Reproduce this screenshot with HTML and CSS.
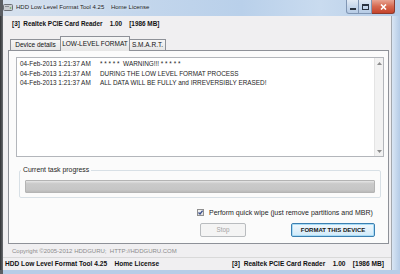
FILE: index.html
```html
<!DOCTYPE html>
<html lang="en">
<head>
  <meta charset="UTF-8">
  <title>HDD Low Level Format Tool 4.25</title>
  <link rel="stylesheet" href="styles.css">
</head>
<body>
  <div class="window">
    <div class="titlebar">
      <svg class="app-icon" width="10" height="9" viewBox="0 0 10 9">
        <rect x="0.5" y="1.5" width="9" height="6" rx="1" fill="#c9ccd1" stroke="#6d7178"/>
        <rect x="2" y="3" width="4" height="1" fill="#8a8f96"/>
        <circle cx="7.5" cy="5" r="0.8" fill="#5fb04a"/>
      </svg>
      <span class="title">HDD Low Level Format Tool 4.25&nbsp;&nbsp;&nbsp;&nbsp;Home License</span>
      <div class="controls">
        <div class="ctl ctl-min">
          <svg width="6" height="6" viewBox="0 0 6 6"><rect x="0" y="4" width="6" height="2" fill="#2b3340"/></svg>
        </div>
        <div class="ctl ctl-max">
          <svg width="7" height="6" viewBox="0 0 7 6"><rect x="0.5" y="0.5" width="6" height="5" fill="none" stroke="#2b3340"/><rect x="1" y="1" width="5" height="1" fill="#2b3340"/></svg>
        </div>
        <div class="ctl ctl-close">
          <svg width="7" height="6" viewBox="0 0 7 6"><path d="M1 0.5 L6 5.5 M6 0.5 L1 5.5" stroke="#fff" stroke-width="1.6"/></svg>
        </div>
      </div>
    </div>

    <div class="frame">
      <div class="edge-left"></div>
      <div class="client">
        <div class="device-line">[3]&nbsp;&nbsp;Realtek PCIE Card Reader&nbsp;&nbsp;&nbsp;&nbsp;1.00&nbsp;&nbsp;&nbsp;&nbsp;[1986 MB]</div>

        <div class="tabs">
          <div class="tab tab-device">Device details</div>
          <div class="tab tab-active">LOW-LEVEL FORMAT</div>
          <div class="tab tab-smart">S.M.A.R.T.</div>
        </div>

        <div class="panel">
          <div class="log">
            <div class="log-lines">
              <div class="log-row"><span class="log-date">04-Feb-2013 1:21:37 AM</span><span class="log-msg">* * * * *&nbsp;&nbsp;WARNING!!! * * * * *</span></div>
              <div class="log-row"><span class="log-date">04-Feb-2013 1:21:37 AM</span><span class="log-msg">DURING THE LOW LEVEL FORMAT PROCESS</span></div>
              <div class="log-row"><span class="log-date">04-Feb-2013 1:21:37 AM</span><span class="log-msg">ALL DATA WILL BE FULLY and IRREVERSIBLY ERASED!</span></div>
            </div>
            <div class="scrollbar">
              <svg width="5" height="3" viewBox="0 0 5 3"><path d="M0 3 L2.5 0 L5 3 Z" fill="#8c8c8c"/></svg>
              <svg width="5" height="3" viewBox="0 0 5 3"><path d="M0 0 L2.5 3 L5 0 Z" fill="#8c8c8c"/></svg>
            </div>
          </div>

          <fieldset class="progress-group">
            <legend>Current task progress</legend>
            <div class="progress-bar"></div>
          </fieldset>

          <div class="quick-wipe">
            <span class="checkbox">
              <svg width="5" height="5" viewBox="0 0 5 5"><path d="M0.5 2.5 L2 4 L4.6 0.6" fill="none" stroke="#3a4f8a" stroke-width="1.3"/></svg>
            </span>
            <span>Perform quick wipe (just remove partitions and MBR)</span>
          </div>

          <div class="actions">
            <div class="btn btn-stop">Stop</div>
            <div class="btn btn-format">FORMAT THIS DEVICE</div>
          </div>
        </div>

        <div class="copyright">Copyright ©2005-2012 HDDGURU;&nbsp;&nbsp;HTTP://HDDGURU.COM</div>

        <div class="statusbar">
          <span>HDD Low Level Format Tool 4.25&nbsp;&nbsp;&nbsp;&nbsp;Home License</span>
          <span>[3]&nbsp;&nbsp;Realtek PCIE Card Reader&nbsp;&nbsp;&nbsp;&nbsp;1.00&nbsp;&nbsp;&nbsp;&nbsp;[1986 MB]</span>
        </div>
      </div>
      <div class="edge-right"></div>
    </div>
    <div class="edge-bottom"></div>
  </div>
</body>
</html>
```

FILE: styles.css
```css
* {
  box-sizing: border-box;
}
body {
  margin: 0;
  padding: 0;
  font-family: "Liberation Sans", Arial, sans-serif;
  background-color: #3c3c3c;
}
.window {
  width: 400px;
  height: 274px;
  display: flex;
  flex-direction: column;
  overflow: hidden;
}
.titlebar {
  height: 16px;
  display: flex;
  align-items: flex-start;
  background: linear-gradient(90deg, #d6e1ee 0%, #c3d6ec 35%, #b9d0ea 60%, #c9dbef 80%, #b6cde8 100%);
  border-left: 3px solid #5b5e63;
}
.app-icon {
  margin: 3px 0 0 0;
}
.title {
  margin: 3px 0 0 3px;
  font-size: 6px;
  line-height: 8px;
  color: #1c1c1c;
  text-shadow: 0 0 3px #eef4fb;
  white-space: nowrap;
}
.controls {
  margin-left: auto;
  margin-right: 5px;
  display: flex;
  height: 14px;
}
.ctl {
  height: 14px;
  display: flex;
  align-items: center;
  justify-content: center;
  border: 1px solid #8096b4;
  border-top: none;
}
.ctl-min {
  width: 13px;
  border-bottom-left-radius: 3px;
  background: linear-gradient(#e3ebf5, #c8d8ec 50%, #b6cbe5);
}
.ctl-max {
  width: 13px;
  border-left: none;
  background: linear-gradient(#e3ebf5, #c8d8ec 50%, #b6cbe5);
}
.ctl-close {
  width: 23px;
  border-left: none;
  border-color: #8d3a2d;
  border-bottom-right-radius: 3px;
  background: linear-gradient(#e8a493, #d6684f 50%, #c5442c);
}
.frame {
  flex: 1;
  display: flex;
}
.edge-left {
  width: 3px;
  background: linear-gradient(90deg, #2f3134, #6b6e72);
}
.edge-right {
  width: 9px;
  border-left: 1px solid #a3a8ae;
  background: linear-gradient(90deg, #d9e6f4, #b4cbe6);
}
.edge-bottom {
  height: 4px;
  background: linear-gradient(90deg, #5b5e63 0 3px, #b7cde7 3px);
}
.client {
  flex: 1;
  display: flex;
  flex-direction: column;
  background-color: #f0eff1;
}
.device-line {
  height: 20px;
  padding-left: 9px;
  font-size: 6.4px;
  font-weight: bold;
  line-height: 16px;
  color: #111;
  white-space: nowrap;
}
.tabs {
  height: 14px;
  display: flex;
  align-items: flex-end;
  padding-left: 7px;
}
.tab {
  height: 11px;
  font-size: 6.5px;
  line-height: 10px;
  text-align: center;
  color: #111;
  border: 1px solid #8e9198;
  border-bottom: none;
  background: linear-gradient(#f6f6f6, #e6e6e6);
  white-space: nowrap;
}
.tab-device {
  width: 50px;
  border-right: none;
}
.tab-active {
  width: 70px;
  height: 15px;
  margin-bottom: -1px;
  line-height: 13px;
  background-color: #fbfbfb;
  position: relative;
  z-index: 1;
}
.tab-smart {
  width: 36px;
  border-left: none;
}
.panel {
  height: 194px;
  margin: 0 2px 0 5px;
  padding: 6px 4px 0 7px;
  border: 1px solid #8e9198;
  background-color: #fbfbfb;
}
.log {
  width: 368px;
  height: 100px;
  display: flex;
  border: 1px solid #b3b6bb;
  background-color: #fff;
}
.log-lines {
  flex: 1;
  padding: 1px 0 0 3px;
  font-size: 6.4px;
  line-height: 9.5px;
  color: #1e1e1e;
}
.log-row {
  display: flex;
  white-space: nowrap;
}
.log-date {
  width: 80px;
}
.scrollbar {
  width: 9px;
  display: flex;
  flex-direction: column;
  justify-content: space-between;
  align-items: center;
  padding: 4px 0 3px;
  background-color: #f2f2f2;
  border-left: 1px solid #e4e4e4;
}
.progress-group {
  width: 362px;
  min-width: 0;
  margin: 9px 0 0 3px;
  padding: 6px 5px 4px 5px;
  border: 1px solid #d8e0e6;
  border-radius: 2px;
}
.progress-group legend {
  margin-left: -4px;
  padding: 0 2px;
  font-size: 6.9px;
  line-height: 8px;
  color: #1e1e1e;
}
.progress-bar {
  height: 13px;
  border: 1px solid #b4b4b4;
  border-radius: 1px;
  background: linear-gradient(#e6e6e6, #cacaca 25%, #c6c6c6 80%, #b9b9b9);
}
.quick-wipe {
  height: 9px;
  margin-top: 10px;
  padding-left: 181px;
  display: flex;
  align-items: center;
  gap: 5px;
  font-size: 7px;
  color: #1e1e1e;
  white-space: nowrap;
}
.checkbox {
  width: 7px;
  height: 7px;
  display: flex;
  align-items: center;
  justify-content: center;
  border: 1px solid #8f8f8f;
  background: linear-gradient(#f4f4f4, #dedede);
}
.actions {
  margin-top: 6px;
  padding-left: 184px;
  display: flex;
  gap: 45px;
}
.btn {
  height: 14px;
  font-size: 6.3px;
  line-height: 12px;
  text-align: center;
  border-radius: 2px;
  white-space: nowrap;
}
.btn-stop {
  width: 46px;
  color: #a3a3a3;
  border: 1px solid #b9bcbf;
  background-color: #f4f4f4;
}
.btn-format {
  width: 84px;
  font-size: 6px;
  font-weight: bold;
  color: #151515;
  border: 1px solid #3c7fb1;
  box-shadow: inset 0 0 0 1px #a9dcf6;
  background: linear-gradient(#f1f8fd, #e2f1fb 50%, #d0eafa);
}
.copyright {
  height: 13px;
  padding: 1px 0 0 9px;
  font-size: 6px;
  line-height: 13px;
  color: #8c8c8c;
  white-space: nowrap;
}
.statusbar {
  height: 13px;
  display: flex;
  justify-content: space-between;
  padding: 0 7px 0 2px;
  border-top: 1px solid #d9d9d9;
  font-size: 6.6px;
  font-weight: bold;
  line-height: 12px;
  color: #111;
  white-space: nowrap;
}
```
